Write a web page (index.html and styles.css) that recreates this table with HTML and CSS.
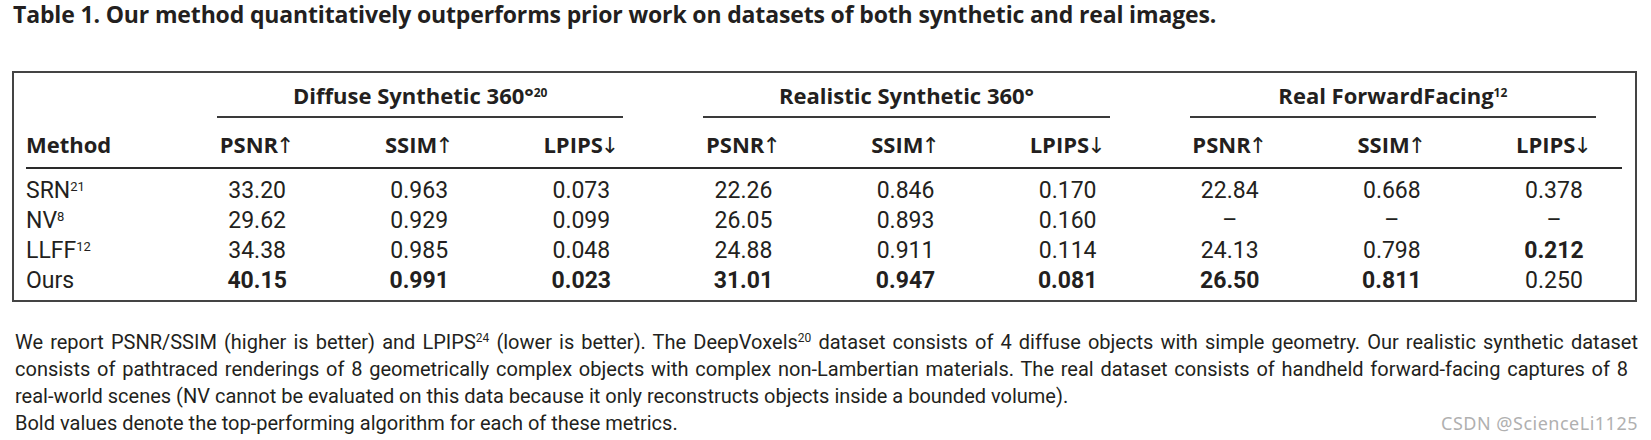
FILE: index.html
```html
<!DOCTYPE html>
<html lang="en">
<head>
<meta charset="utf-8">
<title>Table 1</title>
<link rel="stylesheet" href="styles.css">
</head>
<body>
<div class="page">
  <h1 class="title">Table 1. Our method quantitatively outperforms prior work on datasets of both synthetic and real images.</h1>

  <div class="results">
    <div class="grid group-row">
      <div class="corner"></div>
      <div class="group"><span class="group-label">Diffuse Synthetic 360°<sup class="gsup">20</sup></span></div>
      <div class="group"><span class="group-label">Realistic Synthetic 360°</span></div>
      <div class="group"><span class="group-label">Real ForwardFacing<sup class="gsup">12</sup></span></div>
    </div>

    <div class="grid head-row">
      <div class="hd hd-method">Method</div>
      <div class="hd">PSNR<span class="arrow">↑</span></div>
      <div class="hd">SSIM<span class="arrow">↑</span></div>
      <div class="hd">LPIPS<span class="arrow">↓</span></div>
      <div class="hd">PSNR<span class="arrow">↑</span></div>
      <div class="hd">SSIM<span class="arrow">↑</span></div>
      <div class="hd">LPIPS<span class="arrow">↓</span></div>
      <div class="hd">PSNR<span class="arrow">↑</span></div>
      <div class="hd">SSIM<span class="arrow">↑</span></div>
      <div class="hd">LPIPS<span class="arrow">↓</span></div>
    </div>

    <div class="rule"></div>

    <div class="body">
      <div class="grid row">
        <div class="label">SRN<sup class="dsup">21</sup></div>
        <div class="num">33.20</div><div class="num">0.963</div><div class="num">0.073</div>
        <div class="num">22.26</div><div class="num">0.846</div><div class="num">0.170</div>
        <div class="num">22.84</div><div class="num">0.668</div><div class="num">0.378</div>
      </div>
      <div class="grid row">
        <div class="label">NV<sup class="dsup">8</sup></div>
        <div class="num">29.62</div><div class="num">0.929</div><div class="num">0.099</div>
        <div class="num">26.05</div><div class="num">0.893</div><div class="num">0.160</div>
        <div class="num">–</div><div class="num">–</div><div class="num">–</div>
      </div>
      <div class="grid row">
        <div class="label">LLFF<sup class="dsup">12</sup></div>
        <div class="num">34.38</div><div class="num">0.985</div><div class="num">0.048</div>
        <div class="num">24.88</div><div class="num">0.911</div><div class="num">0.114</div>
        <div class="num">24.13</div><div class="num">0.798</div><div class="num best">0.212</div>
      </div>
      <div class="grid row">
        <div class="label">Ours</div>
        <div class="num best">40.15</div><div class="num best">0.991</div><div class="num best">0.023</div>
        <div class="num best">31.01</div><div class="num best">0.947</div><div class="num best">0.081</div>
        <div class="num best">26.50</div><div class="num best">0.811</div><div class="num">0.250</div>
      </div>
    </div>
  </div>

  <p class="caption">
    <span class="line full">We report PSNR/SSIM (higher is better) and LPIPS<sup class="csup">24</sup> (lower is better). The DeepVoxels<sup class="csup">20</sup> dataset consists of 4 diffuse objects with simple geometry. Our realistic synthetic dataset</span>
    <span class="line full short">consists of pathtraced renderings of 8 geometrically complex objects with complex non-Lambertian materials. The real dataset consists of handheld forward-facing captures of 8</span>
    <span class="line">real-world scenes (NV cannot be evaluated on this data because it only reconstructs objects inside a bounded volume).</span>
    <span class="line">Bold values denote the top-performing algorithm for each of these metrics.</span>
  </p>

  <div class="watermark">CSDN @ScienceLi1125</div>
</div>
</body>
</html>
```

FILE: styles.css
```css
html, body {
  margin: 0;
  padding: 0;
  background: #ffffff;
  overflow: hidden;
}

.page {
  position: relative;
  width: 1651px;
  height: 440px;
  color: #231f20;
}

.title {
  margin: 0 0 43px 13px;
  font-family: "Open Sans", "Liberation Sans", sans-serif;
  font-weight: 700;
  font-size: 23px;
  line-height: 28px;
  letter-spacing: -0.15px;
  white-space: nowrap;
}

.results {
  margin-left: 12px;
  width: 1625px;
  box-sizing: border-box;
  border: 2px solid #444;
  display: flex;
  flex-direction: column;
}

.grid {
  display: grid;
  grid-template-columns: repeat(10, 1fr);
}

.group {
  grid-column: span 3;
  padding: 8px 39px 0 41px;
}

.group-label {
  display: block;
  text-align: center;
  font-family: "Open Sans", "Liberation Sans", sans-serif;
  font-weight: 700;
  font-size: 22px;
  line-height: 28px;
  padding-bottom: 7px;
  border-bottom: 2px solid #3a3a3a;
  white-space: nowrap;
}

.gsup {
  font-size: 12px;
  line-height: 0;
  vertical-align: 7px;
}

.head-row {
  padding: 12px 0 7px;
}

.hd {
  text-align: center;
  font-family: "Open Sans", "Liberation Sans", sans-serif;
  font-weight: 700;
  font-size: 22px;
  line-height: 28px;
  white-space: nowrap;
}

.hd-method {
  text-align: left;
  padding-left: 12px;
}

.arrow {
  font-family: "DejaVu Sans", sans-serif;
  font-weight: 400;
  margin-left: -2px;
}

.rule {
  height: 2px;
  margin: 0 13px 0 12px;
  background: #2a2a2a;
}

.body {
  padding: 7px 0 4px;
}

.row {
  font-family: Roboto, "Liberation Sans", sans-serif;
  font-size: 23px;
  line-height: 30px;
  font-weight: 400;
}

.label {
  padding-left: 12px;
  white-space: nowrap;
}

.num {
  text-align: center;
}

.best {
  font-weight: 700;
}

.dsup {
  font-size: 13px;
  line-height: 0;
  vertical-align: 7px;
}

.caption {
  margin: 27px 13px 0 15px;
  font-family: Roboto, "Liberation Sans", sans-serif;
  font-size: 20px;
  line-height: 27px;
  font-weight: 400;
  color: #231f20;
}

.line {
  display: block;
  white-space: nowrap;
}

.line.full {
  text-align: justify;
  text-align-last: justify;
}

.line.short {
  margin-right: 10px;
}

.csup {
  font-size: 12px;
  line-height: 0;
  vertical-align: 7px;
}

.watermark {
  position: absolute;
  right: 13px;
  top: 411px;
  font-family: "Noto Sans", "DejaVu Sans", sans-serif;
  font-size: 18px;
  line-height: 24px;
  letter-spacing: 0.5px;
  color: #b0b0b0;
  white-space: nowrap;
}
```
